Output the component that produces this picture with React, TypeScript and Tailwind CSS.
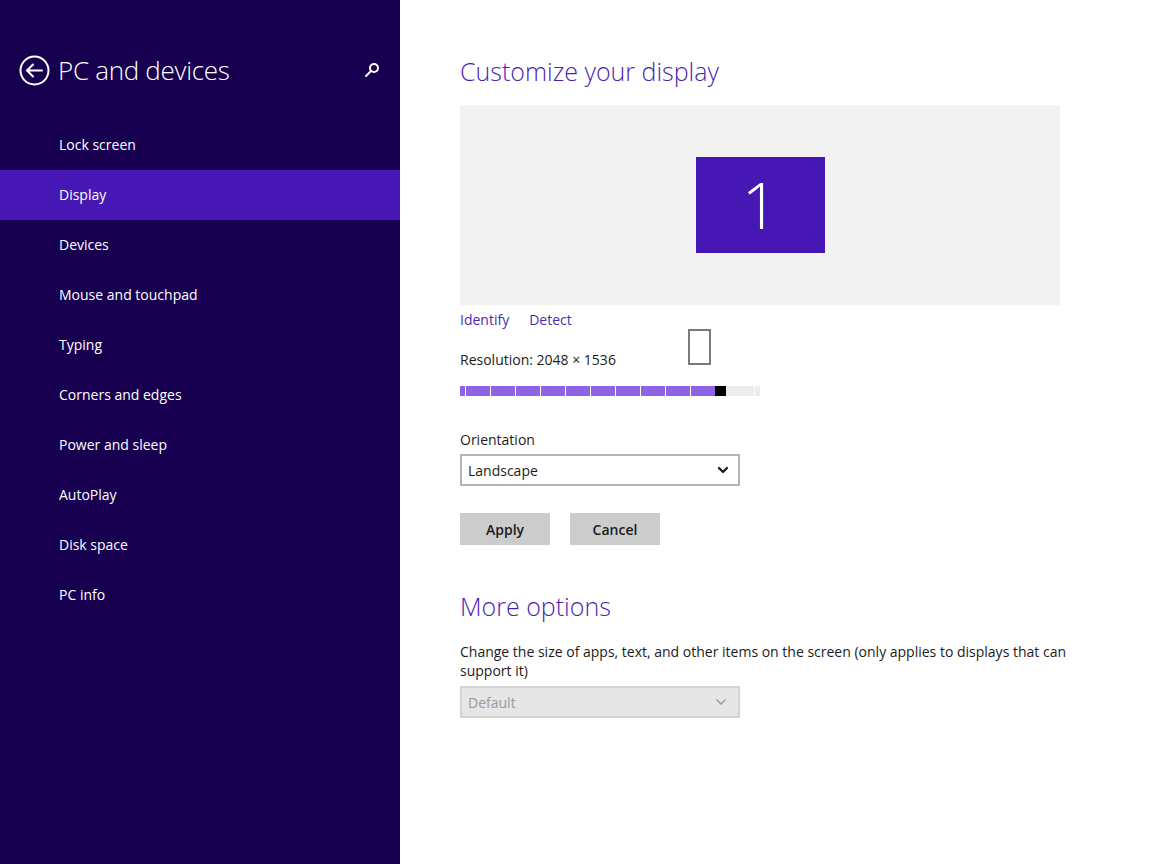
import { ChevronDown } from "lucide-react";

const navItems = [
  "Lock screen",
  "Display",
  "Devices",
  "Mouse and touchpad",
  "Typing",
  "Corners and edges",
  "Power and sleep",
  "AutoPlay",
  "Disk space",
  "PC info",
];

function BackIcon() {
  return (
    <svg width="31" height="31" viewBox="0 0 31 31" fill="none" stroke="white" strokeWidth="2">
      <circle cx="15.5" cy="15.5" r="14" />
      <path d="M8 15.5h15M14 9.5l-6 6 6 6" strokeLinecap="round" strokeLinejoin="round" />
    </svg>
  );
}

function SearchIcon() {
  return (
    <svg width="16" height="16" viewBox="0 0 16 16" fill="none" stroke="white" strokeWidth="2">
      <circle cx="10" cy="6" r="4" />
      <path d="M7 9l-5 5" strokeLinecap="round" />
    </svg>
  );
}

function ResolutionSlider() {
  // ten filled steps, then the thumb, then the empty part of the track
  const steps = Array.from({ length: 10 });
  return (
    <div className="flex h-[10px] w-[300px] items-stretch">
      <div className="w-[5px] bg-[#8d62e6]" />
      {steps.map((_, i) => (
        <div key={i} className="ml-px w-[24px] bg-[#8d62e6]" />
      ))}
      <div className="w-[11px] bg-black" />
      <div className="flex flex-1 bg-[#ececec]">
        <div className="w-[28px]" />
        <div className="w-px bg-white" />
        <div className="flex-1" />
      </div>
    </div>
  );
}

export default function App() {
  return (
    <div className="flex h-[864px] w-[1152px] bg-white font-['Open_Sans',sans-serif] text-[14px]">
      <aside className="flex w-[400px] shrink-0 flex-col bg-[#180050] text-white">
        <div className="flex h-[120px] items-start pt-[55px] pl-[19px] pr-[20px]">
          <BackIcon />
          <h1 className="ml-[8px] -mt-[5px] text-[26px] font-light leading-[40px] tracking-[-0.3px]">
            PC and devices
          </h1>
          <div className="ml-auto mt-[7px]">
            <SearchIcon />
          </div>
        </div>
        <nav className="flex flex-col">
          {navItems.map((item) => (
            <div
              key={item}
              className={
                "flex h-[50px] items-center pb-[2px] pl-[59px] text-[14px] " +
                (item === "Display" ? "bg-[#4617b4]" : "")
              }
            >
              {item}
            </div>
          ))}
        </nav>
      </aside>

      <main className="flex flex-1 flex-col pl-[60px] pt-[52px] text-[#1b1b1b]">
        <h2 className="text-[25px] font-light leading-[38px] text-[#4b1fb2]">Customize your display</h2>

        <div className="mt-[15px] flex h-[200px] w-[600px] items-center justify-center bg-[#f3f2f2]">
          <div className="flex h-[96px] w-[129px] items-center justify-center bg-[#4617b4] text-[64px] font-thin leading-none text-white">
            1
          </div>
        </div>

        <div className="mt-[4px] flex gap-[20px] leading-[22px] text-[#4f2ab5]">
          <span>Identify</span>
          <span>Detect</span>
        </div>

        <div className="relative mt-[18px] leading-[22px]">
          Resolution: 2048 × 1536
          <div className="absolute left-[228px] top-[-20px] h-[36px] w-[23px] border-2 border-[#7a7a7a]" />
        </div>

        <div className="mt-[15px]">
          <ResolutionSlider />
        </div>

        <div className="mt-[33px] leading-[22px]">Orientation</div>
        <div className="mt-[3px] flex h-[32px] w-[280px] items-center justify-between border-2 border-[#b4b4b4] pl-[6px] pr-[7px]">
          <span>Landscape</span>
          <ChevronDown className="h-[16px] w-[16px]" strokeWidth={3.5} />
        </div>

        <div className="mt-[27px] flex gap-[20px]">
          <button className="h-[32px] w-[90px] bg-[#cccccc] font-semibold">Apply</button>
          <button className="h-[32px] w-[90px] bg-[#cccccc] font-semibold">Cancel</button>
        </div>

        <h2 className="mt-[42px] text-[25px] font-light leading-[38px] text-[#4b1fb2]">More options</h2>

        <p className="mt-[17px] w-[615px] leading-[19px]">
          Change the size of apps, text, and other items on the screen (only applies to displays that can support it)
        </p>
        <div className="mt-[6px] flex h-[32px] w-[280px] items-center justify-between border-2 border-[#d3d3d3] bg-[#e6e6e6] pl-[6px] pr-[9px] text-[#9a9a9a]">
          <span>Default</span>
          <ChevronDown className="h-[16px] w-[16px] text-[#a0a0a0]" strokeWidth={2.5} />
        </div>
      </main>
    </div>
  );
}
